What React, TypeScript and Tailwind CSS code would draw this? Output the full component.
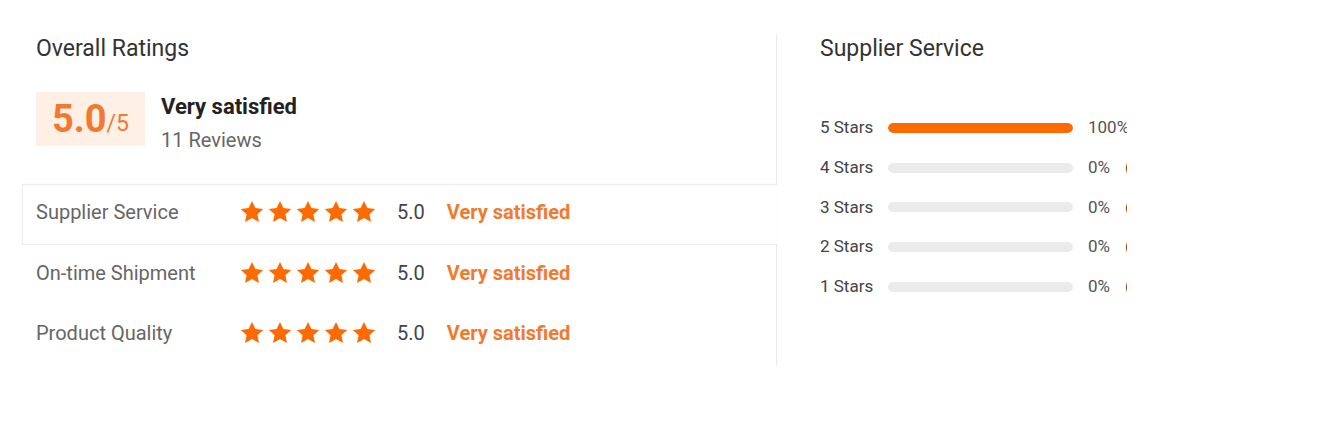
import React from "react";

const Star = () => (
  <svg width="24" height="24" viewBox="0 0 24 24" className="block">
    <path
      d="M12 1l3.4 7.1 7.8.9-5.8 5.3 1.6 7.7L12 18.1l-7 3.9 1.6-7.7L.8 9l7.8-.9z"
      fill="#ff6a00"
    />
  </svg>
);

const rows = [
  { label: "Supplier Service", active: true },
  { label: "On-time Shipment", active: false },
  { label: "Product Quality", active: false },
];

const dist = [
  { label: "5 Stars", pct: 100, count: 11 },
  { label: "4 Stars", pct: 0, count: 0 },
  { label: "3 Stars", pct: 0, count: 0 },
  { label: "2 Stars", pct: 0, count: 0 },
  { label: "1 Stars", pct: 0, count: 0 },
];

export default function App() {
  return (
    <div
      className="w-[1320px] h-[447px] bg-white flex items-start pt-[35px] pl-[22px]"
      style={{ fontFamily: "Roboto, 'Liberation Sans', sans-serif" }}
    >
      <div className="w-[755px] shrink-0 border-r border-[#e9e9e9] flex flex-col">
        <div className="pl-[14px] text-[23px] leading-[28px] text-[#333]">Overall Ratings</div>
        <div className="pl-[14px] mt-[29px] h-[54px] flex items-start">
          <div className="w-[109px] h-[54px] bg-[#fff0e6] flex items-center justify-center">
            <span className="text-[38px] font-bold text-[#f27a2e] leading-none">5.0</span>
            <span className="text-[23px] text-[#f27a2e] leading-none mt-[8px]">/5</span>
          </div>
          <div className="ml-[16px] flex flex-col mt-[2px]">
            <div className="text-[22px] font-bold text-[#222] leading-[26px]">Very satisfied</div>
            <div className="text-[20px] text-[#666] leading-[24px] mt-[8px]">11 Reviews</div>
          </div>
        </div>
        <div className="mt-[38px] flex flex-col">
          {rows.map((r) => (
            <div
              key={r.label}
              className={
                r.active
                  ? "relative z-10 -mr-px h-[61px] bg-white border-t border-l border-b border-[#ececec] flex items-center pl-[13px] pb-[5px] shadow-[0_0_2px_rgba(0,0,0,0.04)]"
                  : "h-[60px] flex items-center pl-[14px] pb-[5px]"
              }
            >
              <div className="w-[204px] shrink-0 text-[20px] text-[#666]">{r.label}</div>
              <div className="flex gap-[4px] shrink-0">
                <Star />
                <Star />
                <Star />
                <Star />
                <Star />
              </div>
              <div className="ml-[21px] text-[20px] text-[#444]">5.0</div>
              <div className="ml-[22px] text-[20px] font-bold text-[#f27a2e]">Very satisfied</div>
            </div>
          ))}
        </div>
      </div>
      <div className="w-[350px] shrink-0 overflow-hidden pl-[43px] flex flex-col">
        <div className="text-[23px] leading-[28px] text-[#333] whitespace-nowrap">Supplier Service</div>
        <div className="mt-[45px] flex flex-col">
          {dist.map((d) => (
            <div key={d.label} className="h-[39.75px] flex items-center whitespace-nowrap">
              <div className="w-[68px] shrink-0 text-[17px] text-[#444]">{d.label}</div>
              <div className="w-[185px] shrink-0 h-[10px] rounded-[5px] bg-[#ebebee] overflow-hidden">
                <div className="h-full bg-[#ff6a00] rounded-[5px]" style={{ width: `${d.pct}%` }} />
              </div>
              <div className="ml-[15px] shrink-0 text-[17px] text-[#555]">{d.pct}%</div>
              <div className="ml-[15px] shrink-0 text-[17px] text-[#333]">({d.count})</div>
            </div>
          ))}
        </div>
      </div>
    </div>
  );
}
